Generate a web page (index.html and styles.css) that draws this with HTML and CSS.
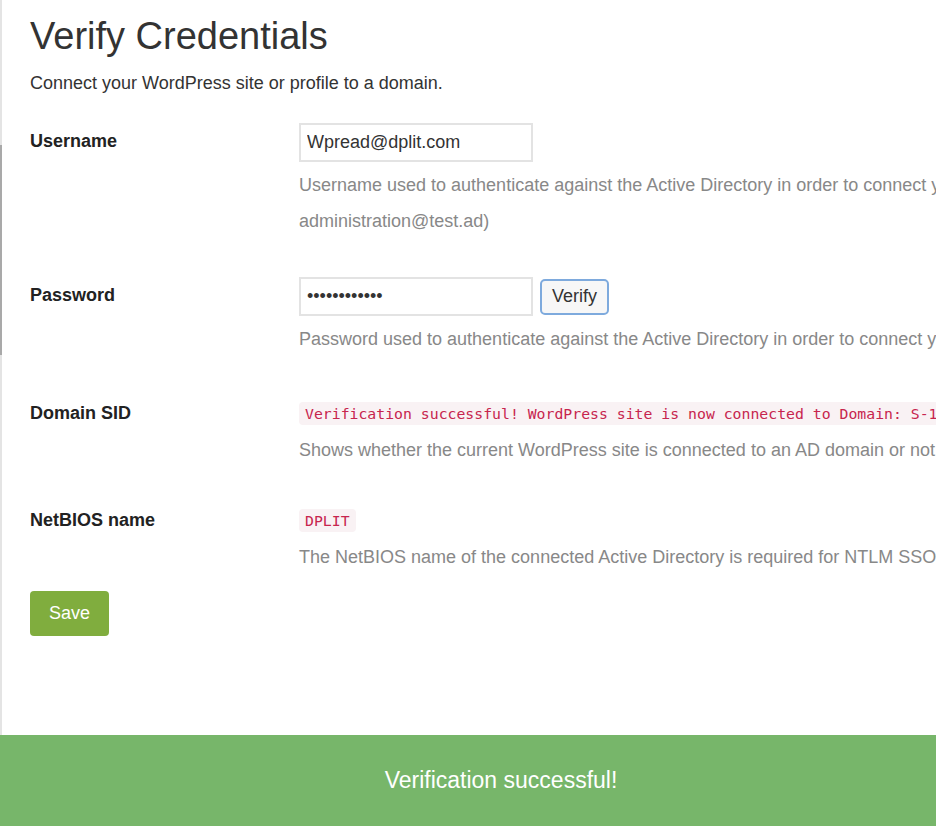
FILE: index.html
```html
<!DOCTYPE html>
<html lang="en">
<head>
  <meta charset="UTF-8">
  <meta name="viewport" content="width=device-width, initial-scale=1.0">
  <title>Verify Credentials</title>
  <link rel="stylesheet" href="styles.css">
</head>
<body>
<main class="page">
  <h1 class="page-title">Verify Credentials</h1>
  <p class="page-lead">Connect your WordPress site or profile to a domain.</p>

  <form class="settings-form">
    <!-- Username -->
    <div class="form-row">
      <label class="form-label" for="username">Username</label>
      <div class="form-field">
        <div class="field-line">
          <input type="text" id="username" class="text-input" value="Wpread@dplit.com">
        </div>
        <p class="help help-after-input">Username used to authenticate against the Active Directory in order to connect your WordPress site to the domain. (e.g.<br>administration@test.ad)</p>
      </div>
    </div>

    <!-- Password -->
    <div class="form-row">
      <label class="form-label" for="password">Password</label>
      <div class="form-field">
        <div class="field-line">
          <input type="password" id="password" class="text-input" value="............">
          <button type="button" class="btn-verify">Verify</button>
        </div>
        <p class="help help-after-input">Password used to authenticate against the Active Directory in order to connect your WordPress site to the domain.</p>
      </div>
    </div>

    <!-- Domain SID -->
    <div class="form-row form-row-static">
      <span class="form-label">Domain SID</span>
      <div class="form-field">
        <div class="code-line"><code class="value-code">Verification successful! WordPress site is now connected to Domain: S-1-5-21-3623811015-3361044348-30300820</code></div>
        <p class="help">Shows whether the current WordPress site is connected to an AD domain or not.</p>
      </div>
    </div>

    <!-- NetBIOS -->
    <div class="form-row form-row-static">
      <span class="form-label">NetBIOS name</span>
      <div class="form-field">
        <div class="code-line"><code class="value-code">DPLIT</code></div>
        <p class="help">The NetBIOS name of the connected Active Directory is required for NTLM SSO.</p>
      </div>
    </div>

    <div class="form-actions">
      <button type="submit" class="btn-save">Save</button>
    </div>
  </form>
</main>

<div class="notice">Verification successful!</div>
</body>
</html>
```

FILE: styles.css
```css
html, body {
  margin: 0;
  padding: 0;
  height: 100%;
  overflow: hidden;
}

body {
  font-family: "Liberation Sans", Arial, sans-serif;
  font-size: 18px;
  color: #333;
  background-color: #fff;
  display: flex;
  flex-direction: column;
}

.page {
  flex: 1;
  padding: 15px 0 0 30px;
  background-image: linear-gradient(#a9a9a9, #a9a9a9), linear-gradient(#e4e4e4, #e4e4e4);
  background-size: 2px 210px, 2px 100%;
  background-position: 0 145px, 0 0;
  background-repeat: no-repeat;
}

.page-title {
  margin: 0;
  font-size: 38px;
  line-height: 42px;
  font-weight: normal;
  color: #333;
}

.page-lead {
  margin: 13px 0 0;
  line-height: 26px;
  color: #333;
}

.settings-form {
  margin-top: 27px;
}

.form-row {
  display: flex;
  margin-bottom: 38px;
}

.form-row-static {
  margin-bottom: 34px;
}

.form-label {
  flex: 0 0 269px;
  font-weight: bold;
  line-height: 36px;
  color: #222;
  margin-top: -12px;
  padding-top: 12px;
}

.form-field {
  flex: 1;
  min-width: 0;
}

.field-line {
  display: flex;
  align-items: center;
  margin-top: -12px;
  padding-top: 12px;
}

.text-input {
  box-sizing: border-box;
  width: 234px;
  height: 39px;
  padding: 0 6px;
  border: 2px solid #e3e3e3;
  font-family: inherit;
  font-size: 18px;
  color: #333;
  background-color: #fff;
}

.btn-verify {
  box-sizing: border-box;
  margin-left: 7px;
  height: 36px;
  padding: 0 10px;
  border: 2px solid #7eaadd;
  border-radius: 5px;
  background-color: #f7f7f7;
  font-family: inherit;
  font-size: 18px;
  color: #333;
}

.help {
  margin: 0;
  line-height: 36px;
  color: #888;
  white-space: nowrap;
}

.help-after-input {
  margin-top: 5px;
}

.code-line {
  line-height: 36px;
  white-space: nowrap;
}

.value-code {
  font-family: "DejaVu Sans Mono", "Liberation Mono", monospace;
  font-size: 14.8px;
  padding: 3px 6px;
  border-radius: 4px;
  background-color: #f9f2f4;
  color: #c7254e;
}

.form-actions {
  margin-top: -18px;
}

.btn-save {
  box-sizing: border-box;
  height: 45px;
  padding: 0 19px;
  border: none;
  border-radius: 4px;
  background-color: #80ad3e;
  color: #fff;
  font-family: inherit;
  font-size: 18px;
  cursor: pointer;
}

.notice {
  flex: 0 0 91px;
  display: flex;
  align-items: center;
  justify-content: center;
  padding-left: 66px;
  background-color: #77b66a;
  color: #fff;
  font-size: 23px;
}
```
